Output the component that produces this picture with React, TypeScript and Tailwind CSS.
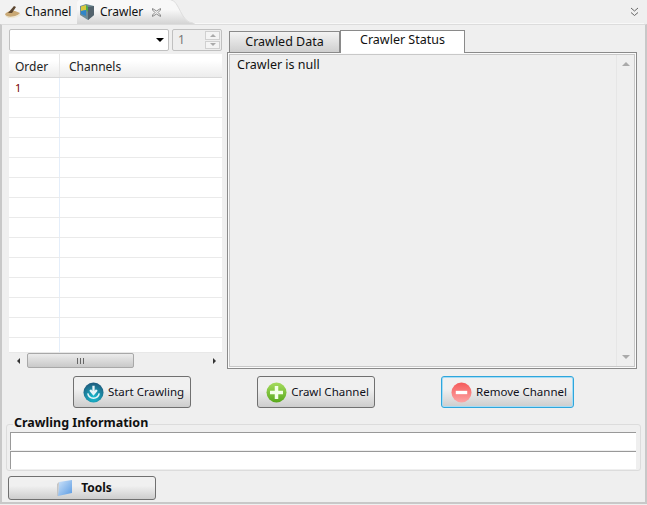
const font = { fontFamily: '"Noto Sans", sans-serif' };

function Btn({ w, label, icon, focus }: { w: string; label: string; icon: React.ReactNode; focus?: boolean }) {
  return (
    <div className={`${w} h-[32px] flex items-center justify-center gap-[4px] pl-[3px] rounded-[3px] border ${focus ? "border-[#2ea6dc] shadow-[inset_0_0_0_1px_#a5dcf5]" : "border-[#707070]"} bg-gradient-to-b from-[#f0f0f0] from-40% to-[#cdcdcd] text-[11.5px] text-[#10101a]`}>
      {icon}
      <span>{label}</span>
    </div>
  );
}

export default function App() {
  return (
    <div style={font} className="w-[647px] h-[505px] bg-[#efefef] flex flex-col overflow-hidden text-[12px] text-[#111]">
      <div className="h-[24px] flex items-end relative">
        <div className="h-[24px] flex items-center pl-[4px] w-[77px] gap-[3px] bg-[#f2f2f2]">
          <svg width="18" height="16" viewBox="0 0 18 16">
            <path d="M1 10 Q5 6 11 7 L16 9 Q12 14 6 14 Q2 13 1 10Z" fill="#c9a874" />
            <path d="M1 11 Q6 15 16 10 L17 11 Q9 17 1 12Z" fill="#eee8d8" />
            <path d="M4 9 L10 2 L12 3 L8 9Z" fill="#5c4630" />
          </svg>
          <span>Channel</span>
        </div>
        <div className="h-[24px] w-[95px] flex items-center pl-[2px] gap-[5px] bg-gradient-to-b from-[#f8f8f8] from-40% to-[#d4d4d4] rounded-t-[3px] relative">
          <svg width="16" height="18" viewBox="0 0 16 18">
            <path d="M1 3 L7 1 L15 3 L15 12 L9 17 L1 12Z" fill="#6f8c96" />
            <path d="M9 4 L15 3 L15 12 L9 17Z" fill="#52626c" />
            <path d="M2 3.5 L7 2 L7 7 L2 8Z" fill="#d9c93a" />
            <path d="M2 8 L7 7 L7 13 L2 11Z" fill="#2f86c8" />
            <path d="M7 2 L9 4 L9 9 L7 7Z" fill="#4fae4a" />
          </svg>
          <span>Crawler</span>
          <svg className="ml-[3px]" width="11" height="11" viewBox="0 0 11 11" fill="none" stroke="#8c8c8c"><path d="M1.5 1.5 L5.5 4 L9.5 1.5 L9.5 3 L7 5.5 L9.5 8 L9.5 9.5 L5.5 7 L1.5 9.5 L1.5 8 L4 5.5 L1.5 3Z" /></svg>
        </div>
        <svg className="-ml-[1px]" width="24" height="24" viewBox="0 0 24 24">
          <defs><linearGradient id="t" x2="0" y2="1"><stop offset="0.4" stopColor="#f8f8f8" /><stop offset="1" stopColor="#d4d4d4" /></linearGradient></defs>
          <path d="M0 0 C8 0 10 23 22 23 L24 24 L0 24Z" fill="url(#t)" />
          <path d="M0 0 C8 0 10 23 22 23" fill="none" stroke="#dedede" />
        </svg>
        <svg className="absolute right-[8px] top-[7px]" width="9" height="10" viewBox="0 0 9 10" fill="none" stroke="#666" strokeWidth="1"><path d="M1 1 L4.5 4 L8 1 M1 5.5 L4.5 8.5 L8 5.5" /></svg>
        <div className="absolute left-[195px] right-[3px] bottom-0 h-px bg-[#f8f8f8]" />
      </div>

      <div className="h-[480px] border-x-2 border-b-2 border-[#c8c8c8] border-t border-t-[#dcdcdc] flex flex-col">
        <div className="flex pl-[7px] pr-[8px] pt-[4px] gap-[5px] h-[344px]">
          <div className="w-[213px] flex flex-col">
            <div className="flex h-[22px] gap-[3px]">
              <div className="w-[160px] border border-[#c0c0c0] rounded-[2px] bg-white flex items-center justify-end pr-[4px]">
                <div className="w-0 h-0 border-x-[4px] border-x-transparent border-t-[4px] border-t-black" />
              </div>
              <div className="w-[50px] border border-[#c0c0c0] rounded-[2px] bg-[#eeeeee] flex items-center pl-[5px] text-[#777]">
                <span className="flex-1">1</span>
                <div className="w-[15px] h-[18px] mr-px flex flex-col gap-px">
                  <div className="flex-1 bg-[#f4f4f4] border border-[#d0d0d0] flex items-center justify-center"><div className="w-0 h-0 border-x-[3px] border-x-transparent border-b-[3px] border-b-[#aaa]" /></div>
                  <div className="flex-1 bg-[#f4f4f4] border border-[#d0d0d0] flex items-center justify-center"><div className="w-0 h-0 border-x-[3px] border-x-transparent border-t-[3px] border-t-[#aaa]" /></div>
                </div>
              </div>
            </div>
            <div className="mt-[3px] mb-px flex-1 min-h-0 flex flex-col bg-white">
              <div className="h-[24px] shrink-0 flex border-b border-[#d8d8d8] bg-gradient-to-b from-white from-30% to-[#ececec] text-[#222]">
                <div className="w-[51px] pl-[6px] pt-[3px] border-r border-[#e6e6e6] flex items-center">Order</div>
                <div className="flex-1 pl-[9px] pt-[3px] flex items-center">Channels</div>
              </div>
              <div className="flex-1 min-h-0 flex flex-col overflow-hidden">
                {Array.from({ length: 14 }).map((_, i) => (
                  <div key={i} className="h-[20px] shrink-0 flex border-b border-[#eaeaea]">
                    <div className="w-[51px] pl-[6px] pt-[1px] border-r border-[#e4eefa] text-[11px] text-[#700] flex items-center">{i === 0 ? "1" : ""}</div>
                  </div>
                ))}
              </div>
              <div className="h-[16px] shrink-0 bg-[#efefef] flex items-center border-t border-[#e8e8e8]">
                <div className="w-[18px] flex justify-center"><div className="w-0 h-0 border-y-[3px] border-y-transparent border-r-[3px] border-r-[#333]" /></div>
                <div className="w-[107px] h-[15px] rounded-[2px] border border-[#a8a8a8] bg-gradient-to-b from-[#ececec] to-[#c9c9c9] flex items-center justify-center gap-px">
                  <span className="w-px h-[6px] bg-[#666]" /><span className="w-px h-[6px] mx-px bg-[#666]" /><span className="w-px h-[6px] bg-[#666]" />
                </div>
                <div className="flex-1 flex justify-end pr-[6px]"><div className="w-0 h-0 border-y-[3px] border-y-transparent border-l-[3px] border-l-[#333]" /></div>
              </div>
            </div>
          </div>

          <div className="flex-1 flex flex-col">
            <div className="h-[23px] flex items-end pl-[2px] relative z-10">
              <div className="w-[111px] h-[21px] border border-b-0 border-[#8a8a8a] bg-gradient-to-b from-[#f3f3f3] to-[#cfcfcf] flex items-center justify-center text-[12.5px] pt-[1px]">Crawled Data</div>
              <div className="w-[125px] h-[23px] -mb-px border border-b-0 border-[#8a8a8a] bg-white flex items-center justify-center text-[12.5px] pb-[3px]">Crawler Status</div>
            </div>
            <div className="flex-1 border border-[#8a8a8a] p-[1px] bg-[#fbfbfb]">
              <div className="h-full border border-[#c8c8c8] bg-[#efefef] flex">
                <div className="flex-1 pl-[7px] pt-[1px] text-[12.5px]">Crawler is null</div>
                <div className="w-[18px] border-l border-[#e6e6e6] flex flex-col justify-between items-center py-[7px]">
                  <div className="w-0 h-0 border-x-[4px] border-x-transparent border-b-[4px] border-b-[#aaa]" />
                  <div className="w-0 h-0 border-x-[4px] border-x-transparent border-t-[4px] border-t-[#aaa]" />
                </div>
              </div>
            </div>
          </div>
        </div>

        <div className="h-[32px] mt-[7px] flex pl-[71px] gap-[66px]">
          <Btn w="w-[118px]" label="Start Crawling" icon={
            <svg width="21" height="21" viewBox="0 0 22 22">
              <defs><radialGradient id="b" cy="75%" r="70%"><stop offset="0" stopColor="#18c0d4" /><stop offset="1" stopColor="#1f5f80" /></radialGradient></defs>
              <circle cx="11" cy="11" r="10.5" fill="url(#b)" />
              <path d="M11 4 v8 M7.5 8.5 l3.5 4 l3.5-4" stroke="#e8f4f8" strokeWidth="2.4" fill="none" />
              <path d="M5 12 q1 5 6 5 q5 0 6-5" stroke="#e8f4f8" strokeWidth="1.6" fill="none" />
            </svg>
          } />
          <Btn w="w-[118px]" label="Crawl Channel" icon={
            <svg width="21" height="21" viewBox="0 0 21 21"><defs><linearGradient id="g" x2="0" y2="1"><stop offset="0" stopColor="#a6dc5e" /><stop offset="1" stopColor="#58a81c" /></linearGradient></defs><circle cx="10.5" cy="10.5" r="10" fill="url(#g)" /><path d="M10.5 4 v13 M4 10.5 h13" stroke="#f4ffe8" strokeWidth="3.5" /></svg>
          } />
          <Btn w="w-[133px]" focus label="Remove Channel" icon={
            <svg width="21" height="21" viewBox="0 0 22 22"><defs><linearGradient id="r" x2="0" y2="1"><stop offset="0" stopColor="#f55a5a" /><stop offset="1" stopColor="#fca5a5" /></linearGradient></defs><circle cx="11" cy="11" r="10.5" fill="url(#r)" /><path d="M5 11 h12" stroke="#fff" strokeWidth="3.5" /></svg>
          } />
        </div>

        <div className="relative mt-[16px] mx-[4px] h-[47px] border border-[#dcdcdc] rounded-[3px] pl-[3px] pr-[4px] pt-[7px] flex flex-col gap-[1px]">
          <span className="absolute left-[6px] -top-[10px] bg-[#efefef] px-px text-[12.5px] font-bold leading-[16px] text-[#111]">Crawling Information</span>
          <div className="h-[18px] bg-white border-t border-l border-[#999]" />
          <div className="h-[18px] bg-white border-t border-l border-[#999]" />
        </div>

        <div className="mt-[5px] ml-[6px] w-[148px] h-[24px] rounded-[3px] border border-[#707070] bg-gradient-to-b from-[#f0f0f0] from-40% to-[#cdcdcd] flex items-center justify-center gap-[7px] pl-[4px] font-bold text-[12px]">
          <svg width="18" height="18" viewBox="0 0 18 18">
            <defs><linearGradient id="f" x1="0" y1="0" x2="1" y2="1"><stop offset="0" stopColor="#cfe4fa" /><stop offset="1" stopColor="#5a9ae2" /></linearGradient></defs>
            <path d="M3 3 L16 1 V14 L2 17Z" fill="url(#f)" />
            <path d="M3 3 L1 5 L1 17 L2 17Z" fill="#c4c4c4" />
          </svg>
          <span>Tools</span>
        </div>
      </div>
    </div>
  );
}
